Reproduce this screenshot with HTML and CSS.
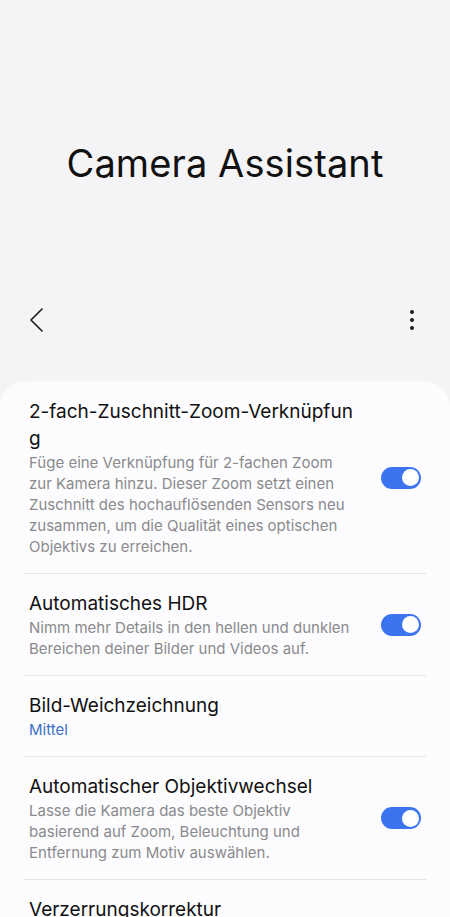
FILE: index.html
```html
<!DOCTYPE html>
<html lang="de">
<head>
    <meta charset="UTF-8">
    <meta name="viewport" content="width=device-width, initial-scale=1.0">
    <title>Camera Assistant</title>
    <link rel="stylesheet" href="styles.css">
</head>
<body>
    <div class="hero">
        <h1>Camera Assistant</h1>
    </div>

    <div class="app-bar">
        <button class="icon-btn" aria-label="Zurück">
            <svg width="24" height="24" viewBox="0 0 24 24"><path d="M17 1 L6 12 L17 23" fill="none" stroke="#1a1a1a" stroke-width="1.6" stroke-linecap="round" stroke-linejoin="round"/></svg>
        </button>
        <button class="icon-btn" aria-label="Mehr">
            <svg width="24" height="24" viewBox="0 0 24 24"><circle cx="12" cy="4" r="2" fill="#1a1a1a"/><circle cx="12" cy="12" r="2" fill="#1a1a1a"/><circle cx="12" cy="20" r="2" fill="#1a1a1a"/></svg>
        </button>
    </div>

    <div class="card">
        <div class="item">
            <div class="item-text">
                <div class="item-title nowrap">2-fach-Zuschnitt-Zoom-Verknüpfun<br>g</div>
                <div class="item-desc">Füge eine Verknüpfung für 2-fachen Zoom zur Kamera hinzu. Dieser Zoom setzt einen Zuschnitt des hochauflösenden Sensors neu zusammen, um die Qualität eines optischen Objektivs zu erreichen.</div>
            </div>
            <span class="switch on"></span>
        </div>
        <div class="item">
            <div class="item-text">
                <div class="item-title">Automatisches HDR</div>
                <div class="item-desc">Nimm mehr Details in den hellen und dunklen Bereichen deiner Bilder und Videos auf.</div>
            </div>
            <span class="switch on"></span>
        </div>
        <div class="item">
            <div class="item-text">
                <div class="item-title">Bild-Weichzeichnung</div>
                <div class="item-value">Mittel</div>
            </div>
        </div>
        <div class="item">
            <div class="item-text">
                <div class="item-title">Automatischer Objektivwechsel</div>
                <div class="item-desc">Lasse die Kamera das beste Objektiv basierend auf Zoom, Beleuchtung und Entfernung zum Motiv auswählen.</div>
            </div>
            <span class="switch on"></span>
        </div>
        <div class="item">
            <div class="item-text">
                <div class="item-title">Verzerrungskorrektur</div>
            </div>
        </div>
    </div>
</body>
</html>
```

FILE: styles.css
```css
body {
    margin: 0;
    font-family: Inter, "Noto Sans", sans-serif;
    background-color: #f4f4f6;
    color: #111;
    overflow: hidden;
}
.hero {
    height: 292px;
    padding-top: 141px;
    box-sizing: border-box;
}
.hero h1 {
    margin: 0;
    text-align: center;
    font-size: 38px;
    font-weight: 400;
    line-height: 44px;
    letter-spacing: 0.1px;
}
.app-bar {
    height: 56px;
    display: flex;
    justify-content: space-between;
    align-items: center;
    padding: 0 26px 0 25px;
}
.icon-btn {
    background: none;
    border: none;
    padding: 0;
    width: 24px;
    height: 24px;
}
.card {
    margin-top: 33px;
    background-color: #fcfcfe;
    border-radius: 26px 26px 0 0;
    padding: 0 24px;
}
.item {
    display: flex;
    align-items: center;
    gap: 30px;
    padding: 16px 5px 16px 5px;
    border-bottom: 1px solid #e4e4e6;
}
.item:first-child {
    padding-top: 17px;
}
.item-text {
    flex: 1;
    min-width: 0;
}
.item-title {
    font-size: 19px;
    line-height: 27px;
}
.nowrap {
    white-space: nowrap;
}
.item-desc {
    font-size: 15px;
    line-height: 21px;
    color: #8a8a8c;
}
.item-value {
    font-size: 15px;
    line-height: 21px;
    color: #3d6fc6;
}
.switch {
    flex-shrink: 0;
    position: relative;
    width: 40px;
    height: 22px;
    border-radius: 11px;
    background-color: #3c73ef;
}
.switch::after {
    content: "";
    position: absolute;
    top: 2.5px;
    right: 2.5px;
    width: 17px;
    height: 17px;
    border-radius: 50%;
    background-color: #fff;
}
```
